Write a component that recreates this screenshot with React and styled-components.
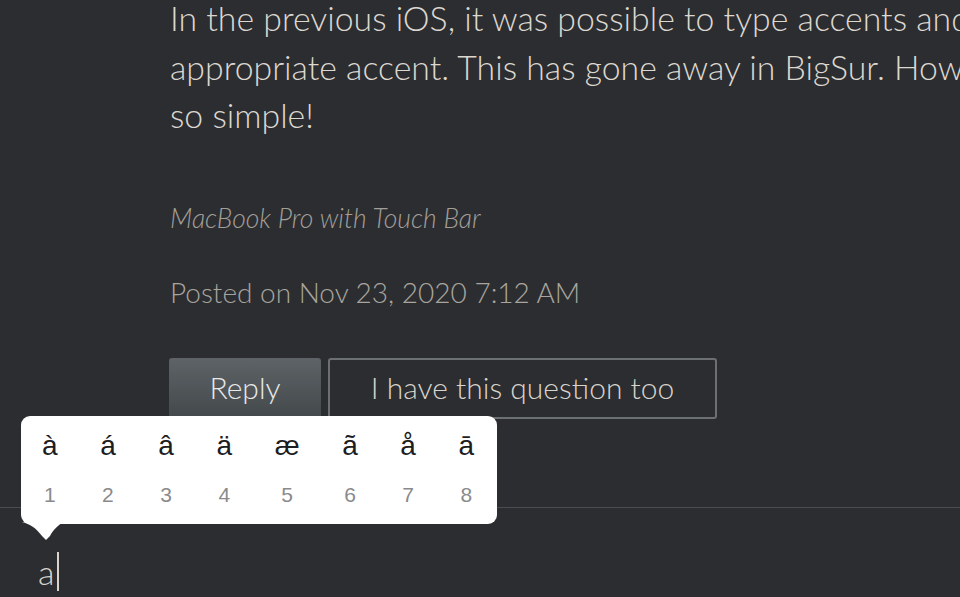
import React from "react";
import styled, { createGlobalStyle } from "styled-components";

const Global = createGlobalStyle`
  html, body { margin: 0; padding: 0; background: #2c2d30; }
  body { font-family: "Lato", "Open Sans", sans-serif; }
`;

const Page = styled.div`
  position: relative;
  width: 960px;
  height: 597px;
  overflow: hidden;
  background: #2c2d30;
  display: flex;
  flex-direction: column;
`;

const Post = styled.div`
  padding-left: 170px;
  margin-top: -6px;
  height: 513px;
  box-sizing: border-box;
  display: flex;
  flex-direction: column;
`;

const Body = styled.p`
  margin: 0;
  font-size: 33.8px;
  line-height: 48.5px;
  color: #dcd8d0;
  white-space: nowrap;
  font-weight: 300;
`;

const Device = styled.div`
  margin-top: 62px;
  font-size: 26.5px;
  line-height: 32px;
  font-style: italic;
  color: #a29f98;
  font-weight: 300;
`;

const Posted = styled.div`
  margin-top: 41px;
  font-size: 28px;
  line-height: 34px;
  color: #a9a59e;
  font-weight: 300;
`;

const Actions = styled.div`
  margin-top: 49px;
  display: flex;
  gap: 7px;
  margin-left: -1px;
`;

const Button = styled.button`
  height: 61px;
  width: ${(p) => p.$w}px;
  box-sizing: border-box;
  padding: 0 0 2px;
  font-family: inherit;
  font-size: 30px;
  font-weight: 300;
  border-radius: 3px;
  color: ${(p) => (p.$primary ? "#e8e8e8" : "#d8d4cc")};
  background: ${(p) =>
    p.$primary ? "linear-gradient(#5d6366, #43484b)" : "transparent"};
  border: ${(p) => (p.$primary ? "none" : "2px solid #6c7073")};
`;

const Composer = styled.div`
  border-top: 1px solid #4b4c50;
  flex: 1;
  padding: 44px 0 0 38px;
  display: flex;
  align-items: flex-start;
`;

const Typed = styled.span`
  font-size: 34px;
  line-height: 40px;
  color: #d8d4cc;
  font-weight: 300;
`;

const Caret = styled.span`
  display: inline-block;
  width: 2px;
  height: 39px;
  margin-left: 3px;
  background: #d8d4cc;
`;

const Popup = styled.div`
  position: absolute;
  left: 21px;
  top: 416px;
  width: 476px;
  height: 108px;
  box-sizing: border-box;
  background: #ffffff;
  border-radius: 9px;
  padding: 10px 0 0 21px;
  display: flex;
  gap: 42.6px;
  font-family: "Liberation Sans", "Inter", sans-serif;
`;

const Tail = styled.svg`
  position: absolute;
  left: 1px;
  top: 106px;
`;

const Option = styled.div`
  display: flex;
  flex-direction: column;
  align-items: center;
`;

const Glyph = styled.span`
  font-size: 28px;
  line-height: 40px;
  color: #1d1d1f;
`;

const Num = styled.span`
  margin-top: 17px;
  font-size: 21px;
  line-height: 24px;
  color: #8a8a8c;
`;

const options = ["à", "á", "â", "ä", "æ", "ã", "å", "ā"];

export default function App() {
  return (
    <>
      <Global />
      <Page>
        <Post>
          <Body>In the previous iOS, it was possible to type accents and</Body>
          <Body>appropriate accent. This has gone away in BigSur. How</Body>
          <Body>so simple!</Body>
          <Device>MacBook Pro with Touch Bar</Device>
          <Posted>Posted on Nov 23, 2020 7:12 AM</Posted>
          <Actions>
            <Button $primary $w={152}>Reply</Button>
            <Button $w={389}>I have this question too</Button>
          </Actions>
        </Post>
        <Composer>
          <Typed>a</Typed>
          <Caret />
        </Composer>
        <Popup>
          {options.map((o, i) => (
            <Option key={o}>
              <Glyph>{o}</Glyph>
              <Num>{i + 1}</Num>
            </Option>
          ))}
          <Tail width="42" height="20" viewBox="0 0 42 20">
            <path d="M0 0 C8 2 14 6 20 14 L24 18 L28 14 C31 8 36 3 42 0 Z" fill="#ffffff" />
          </Tail>
        </Popup>
      </Page>
    </>
  );
}
